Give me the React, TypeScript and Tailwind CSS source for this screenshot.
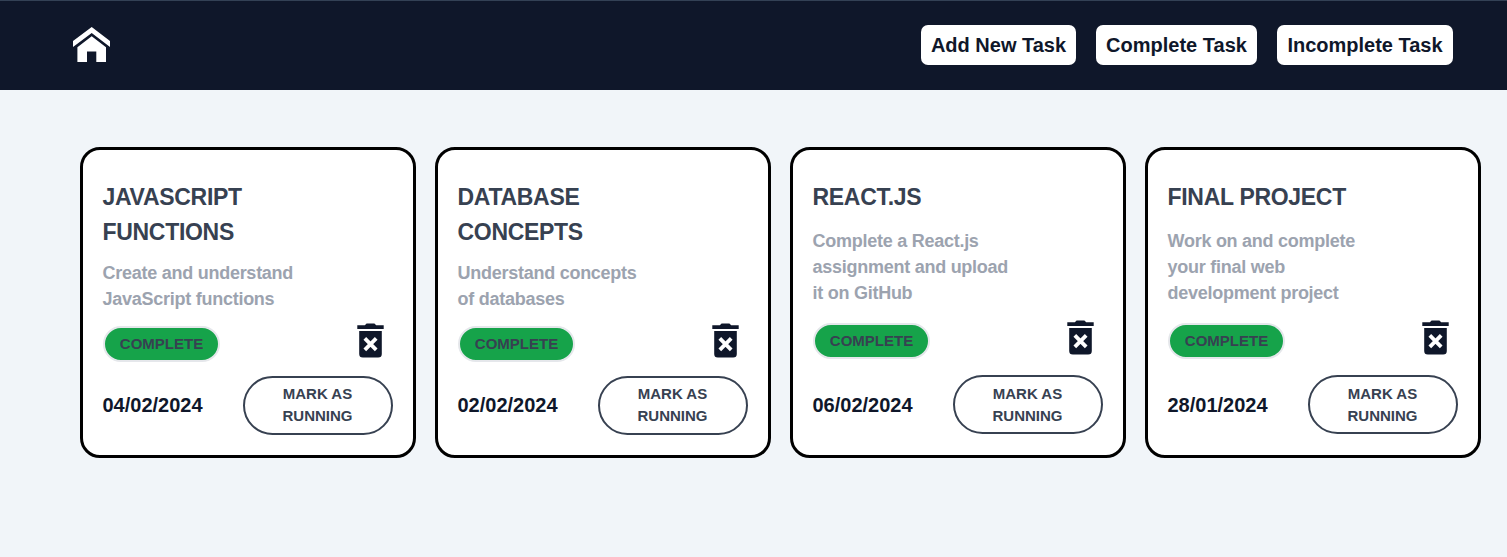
type Task = {
  title: string[];
  description: string[];
  date: string;
};

const tasks: Task[] = [
  { title: ["JAVASCRIPT", "FUNCTIONS"], description: ["Create and understand", "JavaScript functions"], date: "04/02/2024" },
  { title: ["DATABASE", "CONCEPTS"], description: ["Understand concepts", "of databases"], date: "02/02/2024" },
  { title: ["REACT.JS"], description: ["Complete a React.js", "assignment and upload", "it on GitHub"], date: "06/02/2024" },
  { title: ["FINAL PROJECT"], description: ["Work on and complete", "your final web", "development project"], date: "28/01/2024" },
];

function HomeIcon() {
  return (
    <svg width="38" height="36" viewBox="0 0 38 36" fill="#fff" aria-hidden="true">
      <path d="M18.7 0 L37 14 V20 L18.7 6 L0 20 V14 Z" />
      <path d="M18.7 9.2 L33 20.2 V35 H23.3 V24.6 H14 V35 H4.4 V20.2 Z" />
    </svg>
  );
}

function DeleteIcon() {
  return (
    <svg width="27" height="35" viewBox="0 0 27 35" aria-hidden="true">
      <path fill="#0f172a" d="M.3 2.2 H7.8 L9.6 .4 H17.4 L19.2 2.2 H26.7 V6 H.3 Z" />
      <path fill="#0f172a" d="M2.2 8 H24.8 V31 Q24.8 34.6 21.2 34.6 H5.8 Q2.2 34.6 2.2 31 Z" />
      <path stroke="#fff" strokeWidth="3.8" d="M7.8 15.4 L19.2 26.8 M19.2 15.4 L7.8 26.8" />
    </svg>
  );
}

function TaskCard({ task }: { task: Task }) {
  const short = task.title.length === 1;
  return (
    <article className="flex h-[311px] w-[336px] shrink-0 flex-col rounded-[20px] border-[3px] border-black bg-white pt-[30px] pr-5 pl-[19.5px] font-bold">
      <h2 className="text-[23px] leading-[35px] tracking-[-0.3px] whitespace-nowrap text-[#374151]">
        {task.title.map((line) => (
          <span key={line} className="block">{line}</span>
        ))}
      </h2>
      <p className={short ? "mt-[13px] text-[18px] leading-[26px] tracking-[-0.26px] whitespace-nowrap text-[#9ca3af]" : "mt-[10px] text-[18px] leading-[26px] tracking-[-0.26px] whitespace-nowrap text-[#9ca3af]"}>
        {task.description.map((line) => (
          <span key={line} className="block">{line}</span>
        ))}
      </p>
      <div className={short ? "mt-[14px] flex h-[35px] items-start justify-between pr-[9px]" : "mt-[11px] flex h-[35px] items-start justify-between pr-[9px]"}>
        <span className="mt-[3px] ml-[0.5px] flex h-9 w-[117px] shrink-0 items-center justify-center rounded-full border-2 border-[#e5e7eb] bg-[#16a34a] text-[15px] text-[#374151]">
          COMPLETE
        </span>
        <DeleteIcon />
      </div>
      <div className={short ? "mt-5 flex items-start justify-between" : "mt-[18px] flex items-start justify-between"}>
        <time className={short ? "mt-[15px] text-[20px] leading-[30px] text-[#0f172a]" : "mt-[14px] text-[20px] leading-[30px] text-[#0f172a]"}>{task.date}</time>
        <button className={short ? "flex h-[59px] w-[150px] flex-col items-center justify-center rounded-full border-2 border-[#374151] pr-px text-[15px] leading-[22px] text-[#374151]" : "flex h-[59px] w-[150px] flex-col items-center justify-center rounded-full border-2 border-[#374151] pr-px pb-0.5 text-[15px] leading-[22px] text-[#374151]"}>
          <span>MARK AS</span>
          <span>RUNNING</span>
        </button>
      </div>
    </article>
  );
}

export default function App() {
  return (
    <div className="min-h-screen overflow-hidden bg-[#f1f5f9] font-['Liberation_Sans',Arial,sans-serif]">
      <header className="flex h-[90px] items-center justify-between border-t border-[#334155] bg-[#0f172a] pr-[54px] pb-px pl-[73px]">
        <HomeIcon />
        <nav className="flex gap-5 text-[20px] font-bold whitespace-nowrap text-[#0f172a]">
          <button className="h-10 w-[155px] rounded-[7px] bg-white pb-px">Add New Task</button>
          <button className="h-10 w-[161px] rounded-[7px] bg-white pb-px">Complete Task</button>
          <button className="h-10 w-[176px] rounded-[7px] bg-white pb-px">Incomplete Task</button>
        </nav>
      </header>
      <main className="flex gap-[19px] pt-[57px] pl-20">
        {tasks.map((task) => (
          <TaskCard key={task.date} task={task} />
        ))}
      </main>
    </div>
  );
}
